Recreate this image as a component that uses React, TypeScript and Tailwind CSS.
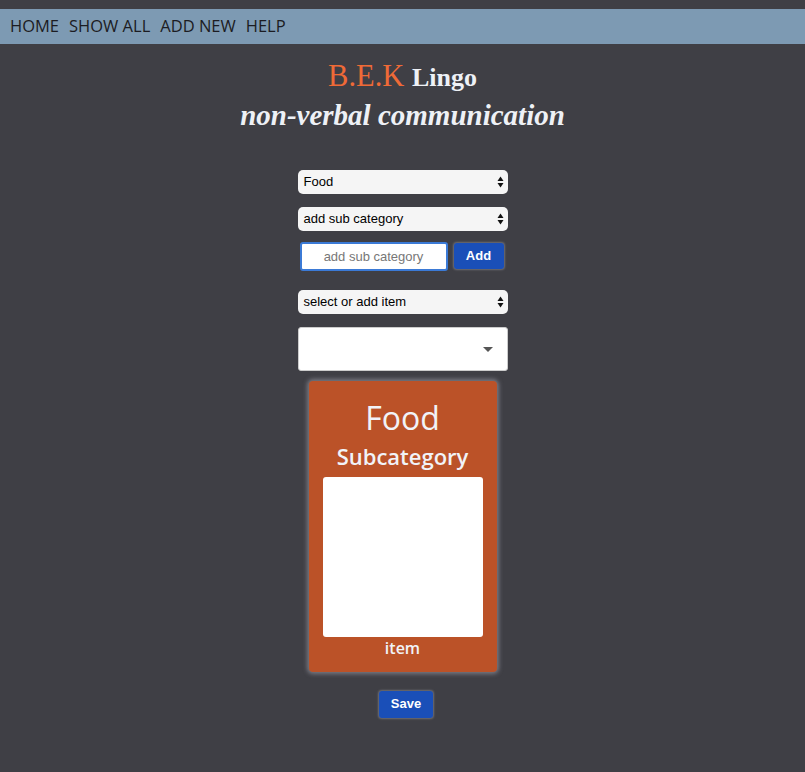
import React from "react";

const selectCls =
  "block w-[210px] h-6 rounded-[5px] bg-[#f5f5f5] pl-[6px] pr-2 text-[13px] text-black appearance-none font-['Liberation_Sans',sans-serif]";

function Arrows() {
  return (
    <svg width="7" height="12" viewBox="0 0 7 12" className="absolute right-[4px] top-[6px]">
      <path d="M0.5 5 L3.5 0.5 L6.5 5 Z" fill="#111" />
      <path d="M0.5 7 L3.5 11.5 L6.5 7 Z" fill="#111" />
    </svg>
  );
}

function Select({ label }: { label: string }) {
  return (
    <div className="relative w-[210px]">
      <div className={selectCls + " flex items-center"}>{label}</div>
      <Arrows />
    </div>
  );
}

export default function App() {
  return (
    <div className="min-h-[772px] bg-[#3f3f45] pt-[9px] font-['Open_Sans',sans-serif]">
      <nav className="flex h-[35px] items-center gap-[10px] bg-[#7d9ab3] pl-[10px] text-[16.5px] text-[#1c1c22]">
        <span>HOME</span>
        <span>SHOW ALL</span>
        <span>ADD NEW</span>
        <span>HELP</span>
      </nav>

      <header className="mt-[17px] text-center font-['Liberation_Serif',serif] leading-none">
        <div className="text-[30.5px]">
          <span className="text-[#ef6a37]">B.E.K</span>{" "}
          <span className="text-[26px] font-bold text-[#eef1f6]">Lingo</span>
        </div>
        <div className="mt-[9px] text-[29px] font-bold italic text-[#eef1f6]">non-verbal communication</div>
      </header>

      <main className="mt-[40px] flex flex-col items-center">
        <Select label="Food" />
        <div className="mt-[13px]">
          <Select label="add sub category" />
        </div>
        <div className="mt-[11px] flex w-[210px] items-center gap-[6px] pl-[2px]">
          <input
            placeholder="add sub category"
            className="h-[29px] w-[148px] rounded-[3px] border-2 border-[#3b7ad6] bg-white text-center text-[13px] text-black placeholder:text-[#777] outline-none font-['Liberation_Sans',sans-serif]"
          />
          <button className="h-[26px] w-[50px] rounded-[3px] bg-[#1a4fb8] text-[13px] font-bold text-white shadow-[0_0_2px_1px_rgba(200,200,210,0.35)] font-['Liberation_Sans',sans-serif]">
            Add
          </button>
        </div>
        <div className="mt-[19px]">
          <Select label="select or add item" />
        </div>
        <div className="relative mt-[13px] h-[44px] w-[210px] rounded-[3px] border border-[#ccc] bg-white">
          <svg width="10" height="6" viewBox="0 0 10 6" className="absolute right-[14px] top-[19px]">
            <path d="M0 0 L10 0 L5 5 Z" fill="#555" />
          </svg>
        </div>

        <div className="mt-[10px] flex h-[291px] w-[188px] flex-col items-center rounded-[4px] bg-[#bb5228] shadow-[0_0_4px_2px_rgba(170,170,180,0.55)]">
          <div className="mt-[21px] text-[32px] leading-none text-[#f1f3f8]">Food</div>
          <div className="mt-[11px] text-[22px] font-semibold leading-none text-[#f1f3f8]">Subcategory</div>
          <div className="mt-[10px] h-[160px] w-[160px] rounded-[3px] bg-white" />
          <div className="mt-[3px] text-[16px] font-semibold leading-none text-[#f1f3f8]">item</div>
        </div>

        <button className="ml-[7px] mt-[19px] h-[27px] w-[54px] rounded-[3px] bg-[#1a4fb8] text-[13px] font-bold text-white shadow-[0_0_2px_1px_rgba(200,200,210,0.35)] font-['Liberation_Sans',sans-serif]">
          Save
        </button>
      </main>
    </div>
  );
}
